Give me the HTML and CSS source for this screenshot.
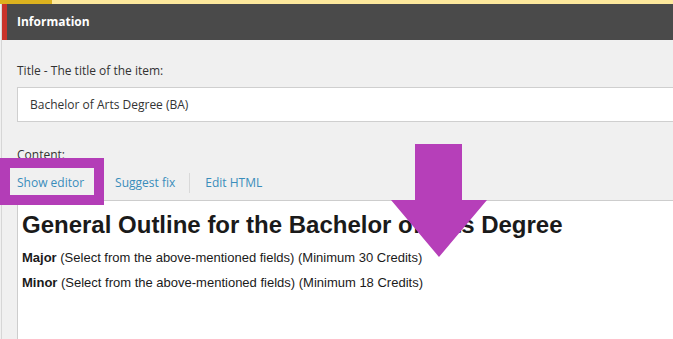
FILE: index.html
```html
<!DOCTYPE html>
<html lang="en">
  <head>
    <meta charset="UTF-8" />
    <meta name="viewport" content="width=device-width, initial-scale=1.0" />
    <title>Information</title>
    <link rel="stylesheet" href="styles.css">
  </head>

  <body>
    <div class="top-strip"></div>

    <div class="panel">
      <div class="panel-header">Information</div>

      <div class="fields">
        <div class="field">
          <label class="field-label" for="title">Title - The title of the item:</label>
          <input type="text" id="title" class="field-input" value="Bachelor of Arts Degree (BA)" />
        </div>

        <div class="field">
          <div class="field-label content-label">Content:</div>
          <div class="tabs">
            <a class="tab tab-active" href="#">Show editor</a>
            <a class="tab" href="#">Suggest fix</a>
            <span class="tab-sep"></span>
            <a class="tab" href="#">Edit HTML</a>
          </div>
          <div class="editor">
            <h1>General Outline for the Bachelor of Arts Degree</h1>
            <p><strong>Major</strong> (Select from the above-mentioned fields) (Minimum 30 Credits)</p>
            <p><strong>Minor</strong> (Select from the above-mentioned fields) (Minimum 18 Credits)</p>
          </div>
        </div>
      </div>
    </div>

    <!-- annotation overlays -->
    <div class="mark-box"></div>
    <svg class="mark-arrow" width="96" height="113" viewBox="0 0 96 113">
      <polygon points="24,0 71,0 71,56 96,56 48,113 0,56 24,56" fill="#b63fb9" />
    </svg>
  </body>
</html>
```

FILE: styles.css
```css
body {
  margin: 0;
  background: #f0f0f0;
  font-family: "Open Sans", "Liberation Sans", sans-serif;
  font-size: 12px;
  color: #333;
  overflow: hidden;
  height: 339px;
  position: relative;
}

.top-strip {
  height: 4px;
  background: linear-gradient(to right, #dcb21e 0, #dcb21e 52px, #fde89c 52px);
}

.panel {
  margin-left: 1px;
  border-left: 1px solid #d6d6d6;
  height: 335px;
  overflow: hidden;
}

.panel-header {
  height: 36px;
  line-height: 35px;
  background: #4a4a4a;
  border-left: 5px solid #c8332a;
  padding-left: 10px;
  color: #fff;
  font-weight: bold;
  font-size: 12px;
}

.fields {
  padding: 21px 0 0 15px;
  margin-right: -60px;
}

.field-label {
  display: block;
  line-height: 20px;
  margin-bottom: 6px;
}

.field-input {
  display: block;
  box-sizing: border-box;
  width: 100%;
  height: 35px;
  margin: 0 0 23px 0;
  padding: 0 12px;
  border: 1px solid #cfcfcf;
  background: #fff;
  font-family: "Open Sans", "Liberation Sans", sans-serif;
  font-size: 12px;
  color: #333;
}

.content-label {
  margin-bottom: 0;
}

.tabs {
  display: flex;
  align-items: center;
  height: 35px;
  border-bottom: 1px solid #cdcdcd;
}

.tab {
  color: #3a8dbb;
  text-decoration: none;
  font-size: 12px;
}

.tab-active {
  margin-right: 31px;
}

.tab-sep {
  width: 1px;
  height: 20px;
  background: #d9d9d9;
  margin: 0 15px 0 14px;
}

.editor {
  background: #fff;
  border-left: 1px solid #cdcdcd;
  height: 140px;
  padding: 8px 4px;
  font-family: "Liberation Sans", Arial, sans-serif;
  color: #1a1a1a;
}

.editor h1 {
  margin: 0 0 7px 0;
  font-size: 24px;
  line-height: 32px;
  font-weight: bold;
}

.editor p {
  margin: 0 0 6px 0;
  font-size: 13px;
  line-height: 19px;
}

.mark-box {
  position: absolute;
  left: 0;
  top: 158px;
  width: 84px;
  height: 27px;
  border: 10px solid #b33db7;
}

.mark-arrow {
  position: absolute;
  left: 391px;
  top: 144px;
}
```
